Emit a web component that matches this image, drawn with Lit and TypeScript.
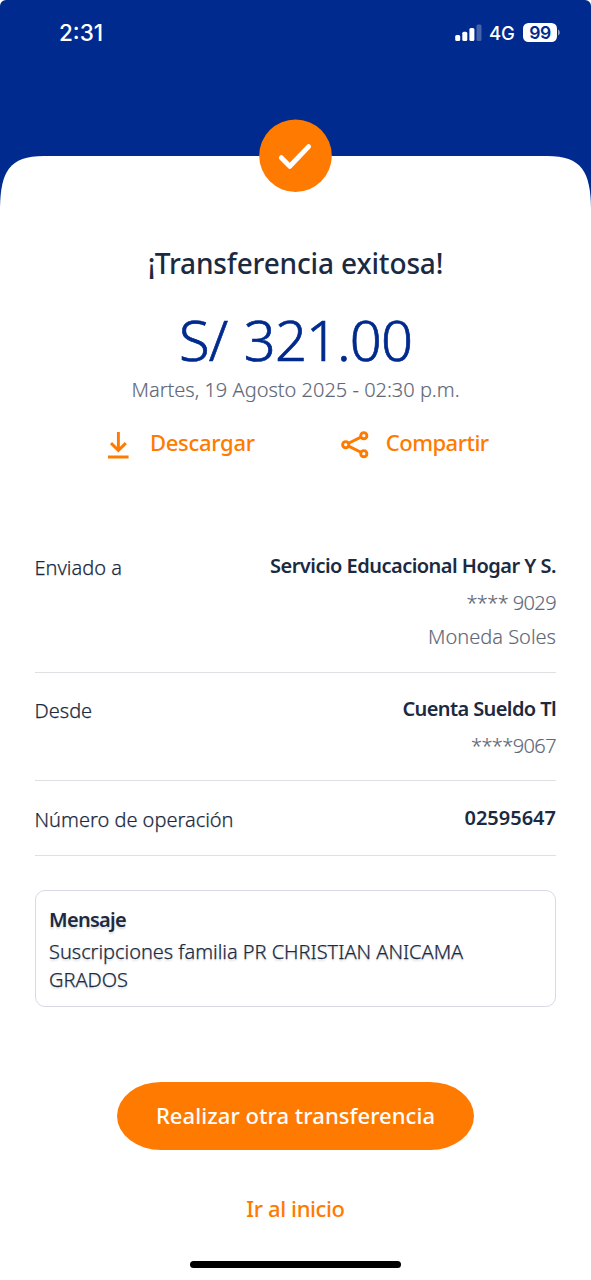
import { LitElement, html, css, svg } from "lit";
import { customElement, property } from "lit/decorators.js";

interface Row {
  label: string;
  value: string;
  kind: string;
  notes: { text: string; kind: string }[];
}

const ROWS: Row[] = [
  {
    label: "Enviado a",
    value: "Servicio Educacional Hogar Y S.",
    kind: "recipient",
    notes: [
      { text: "**** 9029", kind: "masked" },
      { text: "Moneda Soles", kind: "currency" },
    ],
  },
  {
    label: "Desde",
    value: "Cuenta Sueldo Tl",
    kind: "origin",
    notes: [{ text: "****9067", kind: "masked" }],
  },
  { label: "Número de operación", value: "02595647", kind: "number", notes: [] },
];

@customElement("status-bar")
class StatusBar extends LitElement {
  static styles = css`
    :host {
      display: flex;
      justify-content: space-between;
      align-items: center;
      height: 65px;
      padding: 0 31px 0 59px;
      box-sizing: border-box;
      color: #fff;
      font-family: Inter, "Liberation Sans", sans-serif;
    }
    .time {
      font-size: 22.5px;
      font-weight: 550;
      line-height: 30px;
      padding-top: 1px;
    }
    .right {
      display: flex;
      align-items: center;
    }
    .bars {
      display: block;
      margin-right: 7px;
    }
    .net {
      font-size: 18.5px;
      font-weight: 450;
      line-height: 24px;
      width: 34px;
      letter-spacing: -0.2px;
      padding-top: 1px;
    }
    .battery {
      width: 34px;
      height: 19px;
      border-radius: 5.5px;
      background: #fff;
      color: #002a8d;
      font-size: 17.5px;
      font-weight: 600;
      line-height: 19px;
      text-align: center;
      letter-spacing: -0.4px;
    }
    .cap {
      display: block;
      margin-left: 1px;
    }
  `;
  render() {
    return html`
      <span class="time">2:31</span>
      <div class="right">
        <svg class="bars" width="27" height="18" viewBox="0 0 27 18">
          <g fill="#fff">
            <rect x="0.2" y="11" width="5" height="6" rx="1.5" />
            <rect x="7.3" y="7.8" width="5" height="9.2" rx="1.5" />
            <rect x="14.4" y="4" width="5" height="13" rx="1.5" />
            <rect x="21.5" y="0.4" width="5" height="16.6" rx="1.5" opacity="0.27" />
          </g>
        </svg>
        <span class="net">4G</span>
        <span class="battery">99</span>
        <svg class="cap" width="2" height="7" viewBox="0 0 2 7">
          <path d="M0 0.5C2.4 1.6 2.4 5.4 0 6.5Z" fill="#8d9fd0" />
        </svg>
      </div>
    `;
  }
}

@customElement("action-icon")
class ActionIcon extends LitElement {
  @property() name = "download";
  static styles = css`
    :host {
      display: block;
      width: 28px;
      height: 28px;
    }
    .icon {
      display: block;
      fill: none;
      stroke: #ff7a00;
      stroke-width: 2.9;
    }
  `;
  render() {
    const shape =
      this.name === "download"
        ? svg`<path d="M11.4 0.9V19M4 12.1L11.4 19.4L18.8 12.1M1 26H21.6" />`
        : svg`<circle cx="4.7" cy="13.7" r="3.1" /><circle cx="22.8" cy="4.7" r="3.1" /><circle cx="22.8" cy="22.7" r="3.1" /><path d="M7.6 12.3L19.9 6.1M7.6 15.1L19.9 21.3" />`;
    return html`<svg class="icon" width="28" height="28" viewBox="0 0 28 28">${shape}</svg>`;
  }
}

@customElement("detail-row")
class DetailRow extends LitElement {
  @property({ attribute: false }) row!: Row;
  static styles = css`
    :host {
      display: flex;
      justify-content: space-between;
      align-items: flex-start;
      border-bottom: 1px solid #dfe0e4;
      padding: 22.5px 0 20px;
      font-size: 20px;
      line-height: 28px;
      color: #1b2a41;
    }
    .label {
      margin-top: 2px;
      margin-left: -0.5px;
      font-weight: 300;
      -webkit-text-stroke: 0.25px currentColor;
    }
    .values {
      display: flex;
      flex-direction: column;
      align-items: flex-end;
      gap: 6px;
    }
    .value {
      font-weight: 600;
      margin-bottom: 3px;
    }
    .recipient {
      letter-spacing: -0.52px;
    }
    .origin {
      letter-spacing: -0.6px;
    }
    .note {
      font-weight: 300;
      color: #5f6878;
      -webkit-text-stroke: 0.15px currentColor;
    }
    .masked {
      letter-spacing: -0.6px;
    }
  `;
  render() {
    const r = this.row;
    return html`
      <span class="label">${r.label}</span>
      <div class="values">
        <span class="value ${r.kind}">${r.value}</span>
        ${r.notes.map((n) => html`<span class="note ${n.kind}">${n.text}</span>`)}
      </div>
    `;
  }
}

@customElement("app-root")
class AppRoot extends LitElement {
  static styles = css`
    :host {
      display: flex;
      flex-direction: column;
      height: 1280px;
      background: #fff;
      font-family: "Noto Sans", "Open Sans", sans-serif;
      color: #1b2a41;
      overflow: hidden;
    }
    .header {
      position: relative;
      height: 208px;
      flex: none;
      display: flex;
      flex-direction: column;
      justify-content: space-between;
      background: #002a8d;
      border-radius: 6px 6px 0 0;
    }
    .edge {
      display: block;
    }
    .badge {
      position: absolute;
      left: 258.5px;
      top: 119px;
    }
    .title {
      margin: 35px 0 0;
      font-size: 28px;
      line-height: 40px;
      font-weight: 500;
      letter-spacing: -0.15px;
      text-align: center;
    }
    .amount {
      margin-top: 16px;
      font-size: 56px;
      line-height: 80px;
      font-weight: 300;
      letter-spacing: -0.9px;
      word-spacing: 3px;
      color: #002a8d;
      text-align: center;
      -webkit-text-stroke: 0.7px currentColor;
    }
    .date {
      margin-top: -3px;
      font-size: 20px;
      line-height: 28px;
      font-weight: 300;
      color: #5f6878;
      text-align: center;
      -webkit-text-stroke: 0.15px currentColor;
    }
    .actions {
      display: flex;
      margin: 24px 0 0 107px;
      gap: 86px;
      color: #ff7a00;
    }
    .action {
      display: flex;
      gap: 15px;
      height: 32px;
      font-size: 22px;
      line-height: 28px;
      font-weight: 500;
    }
    .action action-icon {
      margin-top: 3px;
    }
    .download {
      letter-spacing: -0.3px;
    }
    .share {
      margin-left: 2px;
      letter-spacing: -0.5px;
    }
    .details {
      margin: 69.5px 35px 0;
    }
    .details detail-row:first-child {
      padding-bottom: 20.5px;
    }
    .message {
      margin: 34px 35px 0;
      box-sizing: border-box;
      height: 117px;
      padding: 15px 13px;
      border: 1px solid #d9d9e6;
      border-radius: 10px;
      font-size: 20px;
      line-height: 28px;
      font-weight: 300;
      text-shadow: 0 2px 2px rgba(27, 42, 65, 0.16);
    }
    .heading {
      font-weight: 600;
      letter-spacing: -0.7px;
      margin-bottom: 4px;
    }
    .body {
      letter-spacing: -0.03px;
      -webkit-text-stroke: 0.25px currentColor;
    }
    .footer {
      display: flex;
      flex-direction: column;
      align-items: center;
      margin-top: 75px;
    }
    .primary {
      width: 357px;
      height: 68px;
      border-radius: 44px / 34px;
      background: #ff7a00;
      color: #fff;
      font-size: 22px;
      line-height: 66px;
      font-weight: 500;
      letter-spacing: 0.06px;
      text-align: center;
    }
    .home {
      margin-top: 42px;
      font-size: 22px;
      line-height: 32px;
      font-weight: 500;
      letter-spacing: -0.38px;
      color: #ff7a00;
    }
    .indicator {
      margin-top: 37px;
      width: 211px;
      height: 7px;
      border-radius: 4px;
      background: #000;
    }
  `;
  render() {
    return html`
      <div class="header">
        <status-bar></status-bar>
        <svg class="edge" width="591" height="52" viewBox="0 0 591 52">
          <path d="M0 52C0.6 16 9 0 44 0H547C582 0 590.4 16 591 52Z" fill="#fff" />
        </svg>
        <svg class="badge" width="73" height="73" viewBox="0 0 73 73">
          <circle cx="36.5" cy="36.7" r="36.3" fill="#ff7a00" />
          <path d="M22.3 38.7L30.8 47.3L49.6 27.6" fill="none" stroke="#fff" stroke-width="4.9" stroke-linecap="round" stroke-linejoin="round" />
        </svg>
      </div>
      <h1 class="title">¡Transferencia exitosa!</h1>
      <div class="amount">S/ 321.00</div>
      <div class="date">Martes, 19 Agosto 2025 - 02:30 p.m.</div>
      <div class="actions">
        <div class="action"><action-icon name="download"></action-icon><span class="download">Descargar</span></div>
        <div class="action"><action-icon name="share"></action-icon><span class="share">Compartir</span></div>
      </div>
      <div class="details">${ROWS.map((r) => html`<detail-row .row=${r}></detail-row>`)}</div>
      <div class="message">
        <div class="heading">Mensaje</div>
        <div class="body">Suscripciones familia PR CHRISTIAN ANICAMA GRADOS</div>
      </div>
      <div class="footer">
        <div class="primary">Realizar otra transferencia</div>
        <div class="home">Ir al inicio</div>
        <div class="indicator"></div>
      </div>
    `;
  }
}
